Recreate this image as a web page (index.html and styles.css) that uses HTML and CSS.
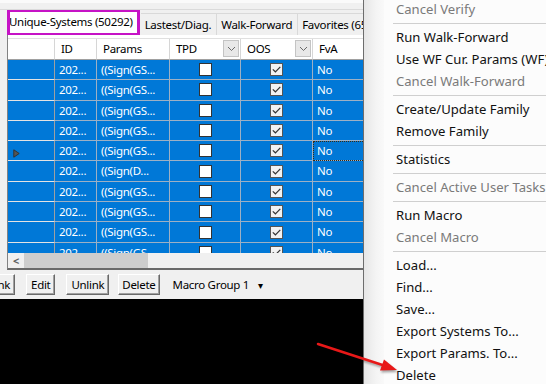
FILE: index.html
```html
<!DOCTYPE html>
<html lang="en">
<head>
    <meta charset="UTF-8">
    <title>Unique Systems</title>
    <link rel="stylesheet" href="styles.css">
</head>
<body>
    <div class="app">
        <div class="topStrip"></div>
        <div class="tabs">
            <div class="tab active">Unique-Systems (50292)</div>
            <div class="tab">Lastest/Diag.</div>
            <div class="tab">Walk-Forward</div>
            <div class="tab">Favorites (65)</div>
        </div>
        <div class="panel">
            <div class="grid">
                <div class="head">
                    <div class="hcell"></div>
                    <div class="hcell">ID</div>
                    <div class="hcell">Params</div>
                    <div class="hcell">TPD <span class="drop"><svg width="9" height="6" viewBox="0 0 9 6"><path d="M1 1l3.5 3.5L8 1" fill="none" stroke="#6a6a6a" stroke-width="1"/></svg></span></div>
                    <div class="hcell">OOS <span class="drop"><svg width="9" height="6" viewBox="0 0 9 6"><path d="M1 1l3.5 3.5L8 1" fill="none" stroke="#6a6a6a" stroke-width="1"/></svg></span></div>
                    <div class="hcell">FvA</div>
                </div>
                <div class="body" id="rows"></div>
            </div>
            <div class="hscroll">
                <span class="arrow">&lt;</span>
                <div class="thumb"></div>
            </div>
        </div>
        <div class="toolbar">
            <button class="btn cut">Link</button>
            <button class="btn">Edit</button>
            <button class="btn">Unlink</button>
            <button class="btn">Delete</button>
            <span class="macro">Macro Group 1 <span class="caret">&#9662;</span></span>
        </div>
        <div class="console"></div>
    </div>
    <div class="shade"></div>
    <div class="menu">
        <div class="item off">Cancel Verify</div>
        <div class="sep"></div>
        <div class="item">Run Walk-Forward</div>
        <div class="item">Use WF Cur. Params (WF)</div>
        <div class="item off">Cancel Walk-Forward</div>
        <div class="sep"></div>
        <div class="item">Create/Update Family</div>
        <div class="item">Remove Family</div>
        <div class="sep"></div>
        <div class="item">Statistics</div>
        <div class="sep"></div>
        <div class="item off">Cancel Active User Tasks</div>
        <div class="sep"></div>
        <div class="item">Run Macro</div>
        <div class="item off">Cancel Macro</div>
        <div class="sep"></div>
        <div class="item">Load...</div>
        <div class="item">Find...</div>
        <div class="item">Save...</div>
        <div class="item">Export Systems To...</div>
        <div class="item">Export Params. To...</div>
        <div class="item">Delete</div>
    </div>

    <svg class="pointer" width="546" height="384" viewBox="0 0 546 384">
        <line x1="318" y1="344" x2="384" y2="365.5" stroke="#e81818" stroke-width="2.5" stroke-linecap="round"/>
        <polygon points="397,370 380,370.5 384,359.5" fill="#e81818"/>
    </svg>

    <script>
        var params = ['GS', 'GS', 'GS', 'GS', 'GS', 'D', 'GS', 'GS', 'GS', 'GS'];
        var check = '<svg width="9" height="7" viewBox="0 0 9 7"><path d="M0.8 3.4l2.6 2.4L8.3 0.8" fill="none" stroke="#333" stroke-width="1.2"/></svg>';
        var html = '';
        for (var i = 0; i < params.length; i++) {
            var current = i == 4;
            html += '<div class="row">' +
                '<div class="cell rh">' + (current ? '<svg width="7" height="9" viewBox="0 0 7 9"><path d="M0.8 0.8L6.2 4.5L0.8 8.2Z" fill="#555" stroke="#333" stroke-width="1"/></svg>' : '') + '</div>' +
                '<div class="cell">202...</div>' +
                '<div class="cell">((Sign(' + params[i] + '...</div>' +
                '<div class="cell mid"><span class="box"></span></div>' +
                '<div class="cell mid"><span class="box on">' + check + '</span></div>' +
                '<div class="cell' + (current ? ' focus' : '') + '">No</div>' +
                '</div>';
        }
        document.getElementById('rows').innerHTML = html;
    </script>
</body>
</html>
```
FILE: styles.css
```css
body {
    margin: 0;
    width: 546px;
    height: 384px;
    overflow: hidden;
    display: flex;
    position: relative;
    font-family: "Noto Sans", sans-serif;
    background: #f0f0f0;
}

.app {
    width: 363px;
    flex: none;
    display: flex;
    flex-direction: column;
    background: #f0f0f0;
    border-right: 1px solid #6d6d6d;
    font-size: 11.5px;
    letter-spacing: -0.3px;
    color: #000;
}

.topStrip {
    height: 10px;
    box-sizing: border-box;
    border-top: 3px solid #fafafa;
    border-bottom: 1px solid #dadada;
}

.tabs {
    height: 25px;
    display: flex;
    align-items: flex-end;
    padding-left: 8px;
    white-space: nowrap;
    overflow: hidden;
}

.tab {
    height: 22px;
    box-sizing: border-box;
    padding: 3px 5px 0 4px;
    border: 1px solid #d9d9d9;
    border-bottom: none;
    border-left: none;
    background: #f0f0f0;
}

.tab.active {
    height: 25px;
    padding: 4px 6px 0 1px;
    background: #fff;
    outline: 3px solid #c613c6;
    outline-offset: -2px;
    border: none;
    margin-right: 2px;
    position: relative;
}

.panel {
    flex: none;
    height: 235px;
    box-sizing: border-box;
    margin-left: 7px;
    padding-top: 3px;
    background: #fff;
    border-left: 1px solid #828282;
    border-bottom: 2px solid #696969;
    display: flex;
    flex-direction: column;
}

.grid {
    flex: 1;
    overflow: hidden;
}

.head,
.row {
    display: grid;
    grid-template-columns: 47px 42px 73px 71px 72px 60px;
}

.head {
    height: 21px;
    border-top: 1px solid #e0e0e0;
}

.hcell {
    position: relative;
    box-sizing: border-box;
    padding: 2px 0 0 6px;
    border-right: 1px solid #d6d6d6;
    border-bottom: 1px solid #a0a0a0;
    background: #fff;
}

.drop {
    position: absolute;
    right: 1px;
    top: 1px;
    width: 16px;
    height: 17px;
    box-sizing: border-box;
    border: 1px solid #c4c4c4;
    background: #e8e8e8;
    display: flex;
    align-items: center;
    justify-content: center;
}

.body {
    display: grid;
    grid-auto-rows: 20.3px;
}

.cell {
    box-sizing: border-box;
    padding: 2px 0 0 4px;
    background: #0078d7;
    color: #fff;
    border-right: 1px solid #9db0c4;
    border-bottom: 1px solid #9db0c4;
    white-space: nowrap;
    overflow: hidden;
}

.cell.rh {
    border-bottom-color: #e3e3e3;
    border-right-color: #a0a0a0;
    padding: 5px 0 0 5px;
}

.cell.mid {
    display: flex;
    justify-content: center;
    align-items: center;
    padding: 0;
}

.cell.focus {
    outline: 1px dotted #3a2a10;
    outline-offset: -1px;
}

.box {
    width: 13px;
    height: 13px;
    box-sizing: border-box;
    border: 1px solid #333;
    background: #fff;
    display: flex;
    align-items: center;
    justify-content: center;
}

.box.on {
    background: #f2f2f2;
    border-color: #555;
}

.hscroll {
    height: 15px;
    flex: none;
    background: #f0f0f0;
    display: flex;
    align-items: center;
}

.arrow {
    width: 16px;
    text-align: center;
    color: #606060;
    font-size: 11px;
    font-weight: bold;
}

.thumb {
    width: 124px;
    height: 15px;
    background: #cdcdcd;
}

.toolbar {
    height: 29px;
    flex: none;
    display: flex;
    align-items: center;
    gap: 11px;
}

.btn {
    height: 21px;
    box-sizing: border-box;
    padding: 0 4px;
    font: inherit;
    letter-spacing: inherit;
    color: #000;
    background: #f0f0f0;
    border: 1px solid;
    border-color: #fff #696969 #696969 #fff;
    box-shadow: inset -1px -1px #a0a0a0;
}

.btn.cut {
    margin-left: -16px;
}

.btn + .btn + .btn + .btn {
    margin-left: -2px;
    padding: 0 3px;
}

.macro {
    margin-left: 2px;
}

.caret {
    font-size: 10px;
    margin-left: 6px;
}

.console {
    flex: 1;
    background: #000;
}

.shade {
    width: 20px;
    flex: none;
    background: linear-gradient(to right, #e6e6e6, #f4f4f4 60%, #f9f9f9);
}

.menu {
    flex: 1;
    margin-top: -2px;
    background: #fcfcfc;
    font-size: 13.1px;
    white-space: nowrap;
    overflow: hidden;
}

.item {
    height: 22px;
    line-height: 22px;
    padding-left: 12px;
    color: #111;
}

.item.off {
    color: #7a7a7a;
}

.sep {
    height: 6px;
    box-sizing: border-box;
    margin-left: 9px;
    border-top: 3px solid #fcfcfc;
    border-bottom: 2px solid #fcfcfc;
    background: #cfcfcf;
}

.pointer {
    position: absolute;
    left: 0;
    top: 0;
    pointer-events: none;
    filter: drop-shadow(1px 2px 1px rgba(0, 0, 0, 0.35));
}
```
